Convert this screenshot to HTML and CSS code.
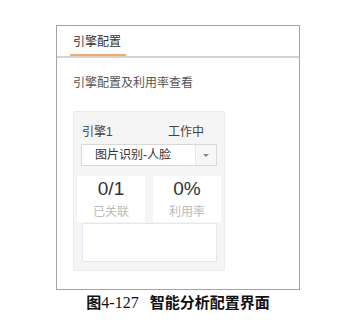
FILE: index.html
```html
<!DOCTYPE html>
<html lang="zh-CN">
<head>
  <meta charset="UTF-8" />
  <meta name="viewport" content="width=device-width, initial-scale=1.0" />
  <title>智能分析配置界面</title>
  <link rel="stylesheet" href="styles.css">
</head>
<body>
  <div class="figure">
    <div class="frame">
      <div class="tabs">
        <span class="tab">引擎配置</span>
      </div>

      <p class="desc">引擎配置及利用率查看</p>

      <div class="card">
        <div class="card-head">
          <span>引擎1</span>
          <span>工作中</span>
        </div>

        <div class="select">
          <span class="select-text">图片识别-人脸</span>
          <span class="select-arrow"><i></i></span>
        </div>

        <div class="stats">
          <div class="stat">
            <div class="stat-num">0/1</div>
            <div class="stat-label">已关联</div>
          </div>
          <div class="stat">
            <div class="stat-num">0%</div>
            <div class="stat-label">利用率</div>
          </div>
        </div>

        <div class="blank"></div>
      </div>
    </div>

    <div class="caption">图<span class="caption-num">4-127</span>智能分析配置界面</div>
  </div>
</body>
</html>
```

FILE: styles.css
```css
body {
  margin: 0;
  background: #fff;
  font-family: 'Liberation Sans', 'Noto Sans CJK SC', sans-serif;
  color: #333;
}

.figure {
  width: 244px;
  margin: 25px 0 0 56px;
}

.frame {
  height: 263px;
  border: 1px solid #a3a3a3;
}

.tabs {
  border-bottom: 2px solid #d4d4d4;
}

.tab {
  display: inline-block;
  margin-left: 13px;
  padding: 8px 5px 4px 3px;
  font-size: 12px;
  line-height: 16px;
  color: #333;
  border-bottom: 2px solid #f6a968;
  vertical-align: top;
}

.desc {
  margin: 17px 0 0 16px;
  font-size: 12px;
  line-height: 16px;
  color: #555;
}

.card {
  width: 150px;
  height: 158px;
  margin: 20px 0 0 16px;
  background: #f5f5f5;
  border: 1px solid #ececec;
  border-radius: 2px;
}

.card-head {
  display: flex;
  justify-content: space-between;
  padding: 12px 20px 0 8px;
  font-size: 12px;
  line-height: 16px;
  color: #444;
}

.select {
  display: flex;
  height: 20px;
  width: 134px;
  margin: 4px 0 0 7px;
  background: #fff;
  border: 1px solid #d9d9d9;
}

.select-text {
  flex: 1;
  padding-left: 13px;
  font-size: 12px;
  line-height: 20px;
  color: #333;
}

.select-arrow {
  width: 20px;
  display: flex;
  align-items: center;
  justify-content: center;
  background: #f7f7f7;
  border-left: 1px solid #e8e8e8;
}

.select-arrow i {
  width: 0;
  height: 0;
  border-left: 3px solid transparent;
  border-right: 3px solid transparent;
  border-top: 3px solid #888;
}

.stats {
  display: flex;
  gap: 8px;
  margin: 10px 3px 0 3px;
}

.stat {
  flex: 1;
  height: 44px;
  padding-top: 2px;
  background: #fff;
  text-align: center;
}

.stat-num {
  font-size: 19px;
  line-height: 22px;
  color: #333;
}

.stat-label {
  margin-top: 4px;
  font-size: 12px;
  line-height: 16px;
  color: #bbb;
}

.blank {
  height: 37px;
  margin: 1px 7px 0 8px;
  background: #fff;
  border: 1px solid #e6e6f2;
}

.caption {
  margin-top: 4px;
  text-align: center;
  font-family: 'Liberation Serif', 'Noto Sans CJK SC', serif;
  font-weight: bold;
  font-size: 15px;
  line-height: 18px;
  color: #111;
}

.caption-num {
  font-weight: normal;
  font-size: 16px;
  margin-right: 11px;
}
```
